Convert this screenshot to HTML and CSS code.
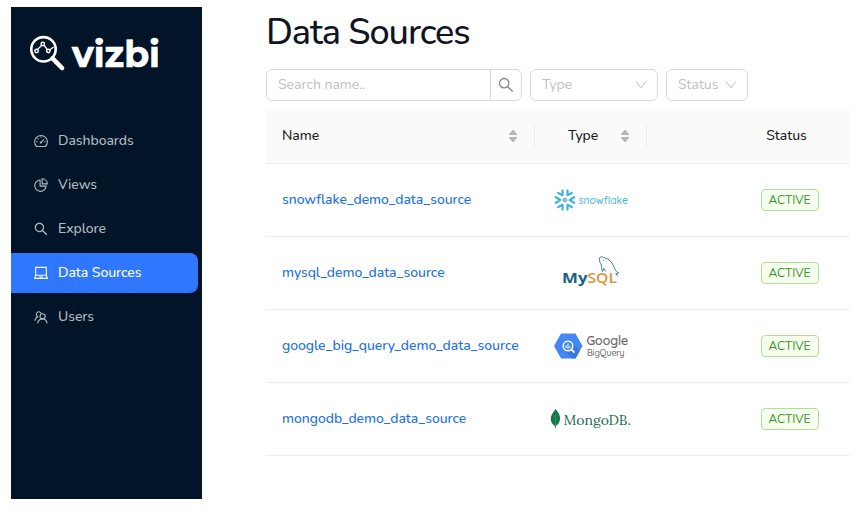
FILE: index.html
```
<!DOCTYPE html>
<html lang="en">
<head>
<meta charset="utf-8">
<title>Vizbi – Data Sources</title>
<link rel="stylesheet" href="styles.css">
</head>
<body>
<svg width="0" height="0" class="defs" aria-hidden="true">
  <symbol id="search" viewBox="64 64 896 896"><path fill="currentColor" d="M909.6 854.5L649.9 594.8C690.2 542.7 712 479 712 412c0-80.2-31.3-155.4-87.9-212.1-56.6-56.7-132-87.9-212.1-87.9s-155.5 31.3-212.1 87.9C143.2 256.5 112 331.8 112 412c0 80.1 31.3 155.5 87.9 212.1C256.5 680.8 331.8 712 412 712c67 0 130.6-21.8 182.7-62l259.7 259.6a8.2 8.2 0 0011.6 0l43.6-43.5a8.2 8.2 0 000-11.6zM570.4 570.4C528 612.7 471.8 636 412 636s-116-23.3-158.4-65.6C211.3 528 188 471.8 188 412s23.3-116.1 65.6-158.4C296 211.3 352.2 188 412 188s116.1 23.2 158.4 65.6S636 352.2 636 412s-23.3 116.1-65.6 158.4z"/></symbol>
  <symbol id="sorter" viewBox="0 0 10 14"><path fill="currentColor" d="M5 .6L9 5.2a.4.4 0 01-.3.7H1.3a.4.4 0 01-.3-.7zM5 13.4L9 8.8a.4.4 0 00-.3-.7H1.3a.4.4 0 00-.3.7z"/></symbol>
  <symbol id="chevron" viewBox="0 0 12 12"><path fill="none" stroke="currentColor" d="M1 2.4l5 6.4 5-6.4"/></symbol>
</svg>
<div class="app">
  <aside class="sidebar">
    <svg class="brand" width="132" height="38" viewBox="0 0 132 38">
      <g fill="none" stroke="#fff">
        <circle cx="14.5" cy="14.3" r="12.2" stroke-width="2.6"/>
        <path d="M23.5 23.4L33 33" stroke-width="4.6" stroke-linecap="round"/>
        <path d="M8.6 14.4L12.8 10.2M14.9 10.2l3.400 4.300M20.600 14.900l4-3" stroke-width="1.3"/>
        <circle cx="7.600" cy="16" r="1.7" stroke-width="1.5"/>
        <circle cx="13.800" cy="9" r="1.7" stroke-width="1.5"/>
        <circle cx="19.300" cy="16" r="1.7" stroke-width="1.5"/>
      </g>
      <text class="brand-name" x="43" y="32" textLength="88" lengthAdjust="spacingAndGlyphs">vizbi</text>
    </svg>
    <nav class="nav">
      <a class="nav-item"><svg class="icon" viewBox="0 0 14 14" fill="none" stroke="currentColor" stroke-width="1.1"><path d="M2.6 12.500A6.400 6.400 0 1111.400 12.500z" stroke-linejoin="round"/><path d="M7 8.600L9.800 5.400M7 2.400v1.300M2.300 7.800h1.400M10.400 7.800h1.400M3.500 4.400l1 .9"/><circle cx="6.900" cy="8.600" r=".6"/></svg><span>Dashboards</span></a>
      <a class="nav-item"><svg class="icon" viewBox="0 0 14 14" fill="none" stroke="currentColor" stroke-width="1.1"><path d="M6.100 2a5.700 5.700 0 106 6.100h-6z"/><path d="M8.200.7v5.200h5.200A5.400 5.400 0 008.200.7z"/></svg><span>Views</span></a>
      <a class="nav-item"><svg class="icon"><use href="#search"/></svg><span>Explore</span></a>
      <a class="nav-item active"><svg class="icon" viewBox="0 0 14 14" fill="none" stroke="currentColor" stroke-width="1.1"><path d="M1.700 9.200V1.400h10.600v7.800M1.700 9.200h10.600l1.100 3.200H.6zM5.200 11h3.600"/></svg><span>Data Sources</span></a>
      <a class="nav-item"><svg class="icon" viewBox="0 0 14 14" fill="none" stroke="currentColor" stroke-width="1.1"><circle cx="8.600" cy="6.300" r="2.600"/><path d="M3.600 13.300c.5-2.600 2-4.400 5-4.400s4 1.800 4.500 4.400M7.400 3.600A2.600 2.600 0 103.700 6.700M.9 10.800c.3-2.300 1.100-3.500 3.300-4"/></svg><span>Users</span></a>
    </nav>
  </aside>
  <main class="content">
    <h1 class="title">Data Sources</h1>
    <div class="filters">
      <div class="search"><span class="search-field">Search name..</span><span class="search-button"><svg class="search-icon"><use href="#search"/></svg></span></div>
      <div class="select type"><span>Type</span><svg class="chevron"><use href="#chevron"/></svg></div>
      <div class="select status"><span>Status</span><svg class="chevron"><use href="#chevron"/></svg></div>
    </div>
    <div class="table">
      <div class="row head">
        <div class="cell name"><span>Name</span><svg class="sorter"><use href="#sorter"/></svg></div>
        <div class="cell kind"><span>Type</span><svg class="sorter"><use href="#sorter"/></svg></div>
        <div class="cell state"><span>Status</span></div>
      </div>
      <div class="row">
        <div class="cell"><a class="link">snowflake_demo_data_source</a></div>
        <div class="cell logo"><svg width="82" height="36" viewBox="550 182 82 36">
          <g fill="none" stroke="#38afe0" stroke-width="2.100" stroke-linecap="round" stroke-linejoin="round">
            <path id="flake" d="M562.500 190.500v4.800l-4.300-2.500M567.500 190.500v4.800l4.300-2.500M555.700 197.200l4.600 2.800-4.600 2.800"/>
            <use href="#flake" transform="rotate(180 565 200)"/>
            <path stroke-width="1.200" d="M565 198.200l1.800 1.800-1.800 1.800-1.800-1.800z"/>
          </g>
          <text class="snowflake" x="578.500" y="204" textLength="49.500" lengthAdjust="spacingAndGlyphs">snowflake</text></svg></div>
        <div class="cell state"><span class="tag">ACTIVE</span></div>
      </div>
      <div class="row">
        <div class="cell"><a class="link">mysql_demo_data_source</a></div>
        <div class="cell logo"><svg width="82" height="44" viewBox="550 251 82 44">
          <text class="mysql" x="562" y="283.300" textLength="25.500" lengthAdjust="spacingAndGlyphs">My</text>
          <text class="mysql sql" x="587.500" y="283.300" textLength="29.500" lengthAdjust="spacingAndGlyphs">SQL</text>
          <path d="M602.500 271.500c-1.200-2-.5-3.500-1-5.500-.3-2-1.700-3-2-5.500-.2-2 .1-3.600 1.800-3.700 1.600-.1 2.800 1 4.800 1.600 4.500 1.300 6.500 5.500 8.500 10 1.200 2.800 2.200 3.600 4.200 4.600l-3.200.8 2.500 2.300M602.500 271.500l1.300-3 2 3" fill="none" stroke="#25718c" stroke-width=".9"/><circle cx="603.500" cy="260.500" r=".5" fill="#25718c"/></svg></div>
        <div class="cell state"><span class="tag">ACTIVE</span></div>
      </div>
      <div class="row">
        <div class="cell"><a class="link">google_big_query_demo_data_source</a></div>
        <div class="cell logo"><svg width="82" height="36" viewBox="550 328 82 36">
          <path fill="#4387f4" d="M561 333.500h14.500l7 12.500-7 12.500H561L554 346z"/><path fill="#3a78dc" d="M572.500 343l7.500 7.500-4.500 8h-3.300l-7-7z"/>
          <circle cx="568" cy="346" r="4.800" fill="#4387f4" stroke="#fff" stroke-width="1.400"/><path d="M571.600 349.600l2.500 2.500" stroke="#fff" stroke-width="1.700" stroke-linecap="round"/><path d="M566 345.500v2.500M568 343.800v5M570 346.300v1.700" stroke="#fff" stroke-width="1.100"/>
          <text class="google" x="586.500" y="345" textLength="41.500" lengthAdjust="spacingAndGlyphs">Google</text>
          <text class="bigquery" x="587" y="355.700" textLength="37.500" lengthAdjust="spacingAndGlyphs">BigQuery</text></svg></div>
        <div class="cell state"><span class="tag">ACTIVE</span></div>
      </div>
      <div class="row">
        <div class="cell"><a class="link">mongodb_demo_data_source</a></div>
        <div class="cell logo"><svg width="82" height="36" viewBox="550 401 82 36">
          <path fill="#13784a" d="M555.300 409c2.700 3 5 5.800 4.700 10-.2 3.200-2 5.500-4.200 7l-.1 2.500h-.7l-.2-2.500c-2.500-1.700-4-4-4-7.200 0-4.100 3-6.700 4.500-9.800z"/><path d="M555.400 415v12" stroke="#5ba879" stroke-width=".6"/>
          <text class="mongo" x="563.500" y="425" textLength="67.500" lengthAdjust="spacingAndGlyphs">MongoDB.</text></svg></div>
        <div class="cell state"><span class="tag">ACTIVE</span></div>
      </div>
    </div>
  </main>
</div>
</body>
</html>
```
FILE: styles.css
```
* { box-sizing: border-box; }
body { margin: 0; background: #fff; font: 14px/22px Nunito, Lato, "Noto Sans", sans-serif; color: #1c1c1e; }
.defs { display: block; }
.app { display: flex; height: 514px; padding: 7px 11px 15px; overflow: hidden; }
.sidebar { width: 191px; flex: none; height: 492px; background: #021428; padding-top: 28px; }
.brand { display: block; margin-left: 18px; overflow: visible; }
.brand-name { font: 700 36px Montserrat, Poppins, Nunito, sans-serif; fill: #fff; stroke: #fff; stroke-width: .6px; }
.nav { margin-top: 48px; display: flex; flex-direction: column; gap: 4px; }
.nav-item { display: flex; align-items: center; gap: 10px; height: 40px; width: 187px; padding-left: 23px; color: #b3bac0; border-radius: 0 8px 8px 0; font-weight: 500; letter-spacing: -.05px; }
.nav-item.active { background: #2f77ff; color: #fff; }
.icon { width: 14px; height: 14px; flex: none; position: relative; top: -.5px; }
.content { width: 584px; margin-left: 64px; flex: none; }
.title { margin: 0; height: 62px; padding-top: 4px; font-size: 36px; line-height: 44px; font-weight: 500; letter-spacing: -1.05px; color: #10151f; white-space: nowrap; }
.filters { display: flex; gap: 8px; height: 32px; color: #bfbfbf; }
.search { display: flex; width: 256px; border: 1px solid #d9d9d9; border-radius: 6px; }
.search-field { flex: 1; padding: 4px 11px; }
.search-button { width: 31px; border-left: 1px solid #d9d9d9; display: flex; align-items: center; justify-content: center; color: #8c8c8c; }
.search-icon { width: 16px; height: 16px; }
.select { display: flex; align-items: center; justify-content: space-between; padding: 0 10px 0 11px; border: 1px solid #d9d9d9; border-radius: 6px; }
.select.type { width: 128px; }
.select.status { width: 82px; }
.chevron { width: 12px; height: 12px; }
.table { margin-top: 8px; }
.row { display: grid; grid-template-columns: 269px 112px 203px; height: 73px; border-bottom: 1px solid #ededed; }
.head { height: 55px; background: #fafafa; border-radius: 8px 0 0; font-weight: 500; letter-spacing: -.05px; }
.cell { display: flex; align-items: center; padding-left: 16px; min-width: 0; }
.head .name, .head .kind { justify-content: space-between; padding-right: 17px; background: linear-gradient(#ededed, #ededed) right center / 1px 22px no-repeat; }
.head .kind { padding-left: 33px; }
.sorter { width: 10px; height: 14px; color: #b5b5b5; }
.cell.logo { padding: 0 0 0 15px; }
.cell.state { padding: 0 0 0 82px; justify-content: center; }
.head .cell.state { padding-left: 76px; }
.link { color: #2271e0; font-weight: 500; letter-spacing: -.05px; white-space: nowrap; }
.tag { width: 58px; height: 22px; border: 1px solid #b2dd99; border-radius: 4px; background: #f6ffed; color: #37922b; font-size: 12px; line-height: 20px; text-align: center; }
.snowflake { font: 500 11.500px Quicksand, Nunito, sans-serif; fill: #42b2df; }
.mysql { font: 700 14px "Open Sans", sans-serif; fill: #1b6280; }
.mysql.sql { fill: #dc963b; font-weight: 600; }
.google { font: 500 13.500px Quicksand, Nunito, sans-serif; fill: #656565; stroke: #656565; stroke-width: .2px; }
.bigquery { font: 9px Quicksand, Nunito, sans-serif; fill: #656565; stroke: #656565; stroke-width: .15px; }
.mongo { font: 14px Lora, "DejaVu Serif", serif; fill: #206a50; }
```
